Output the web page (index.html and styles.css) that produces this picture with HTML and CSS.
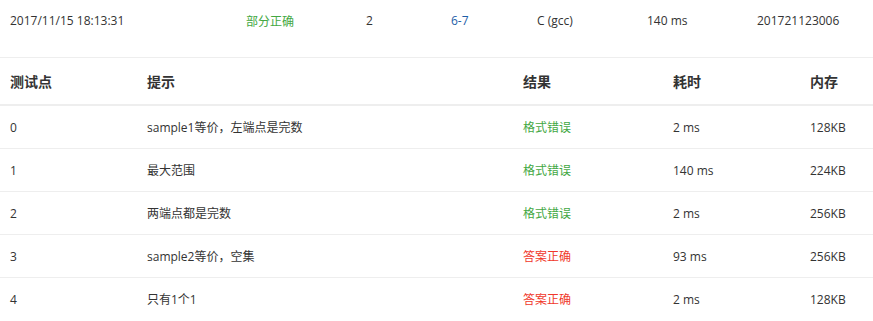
FILE: index.html
```html
<!DOCTYPE html>
<html lang="zh">
<head>
<meta charset="utf-8">
<link rel="stylesheet" href="styles.css">
</head>
<body>
<div class="summary">
  <span>2017/11/15 18:13:31</span>
  <span class="ok-part">部分正确</span>
  <span>2</span>
  <span class="link">6-7</span>
  <span>C (gcc)</span>
  <span>140 ms</span>
  <span>201721123006</span>
</div>
<div class="cases">
  <div class="row head">
    <span>测试点</span><span>提示</span><span>结果</span><span>耗时</span><span>内存</span>
  </div>
  <div class="row">
    <span>0</span><span>sample1等价，左端点是完数</span><span class="pe">格式错误</span><span>2 ms</span><span>128KB</span>
  </div>
  <div class="row">
    <span>1</span><span>最大范围</span><span class="pe">格式错误</span><span>140 ms</span><span>224KB</span>
  </div>
  <div class="row">
    <span>2</span><span>两端点都是完数</span><span class="pe">格式错误</span><span>2 ms</span><span>256KB</span>
  </div>
  <div class="row">
    <span>3</span><span>sample2等价，空集</span><span class="wa">答案正确</span><span>93 ms</span><span>256KB</span>
  </div>
  <div class="row last">
    <span>4</span><span>只有1个1</span><span class="wa">答案正确</span><span>2 ms</span><span>128KB</span>
  </div>
</div>
</body>
</html>
```

FILE: styles.css
```css
html, body {
  margin: 0;
  padding: 0;
  background: #fff;
}
body {
  font-family: "Open Sans", "Noto Sans CJK SC", sans-serif;
  font-size: 12px;
  color: #333;
}
.summary {
  display: grid;
  grid-template-columns: 236px 120px 85px 86px 110px 110px 1fr;
  padding-left: 10px;
  height: 41px;
  align-items: center;
  border-bottom: 1px solid #eeeeee;
  padding-bottom: 16px;
}
.ok-part { color: #43a843; }
.link { color: #1d5ea8; }
.cases { display: flex; flex-direction: column; }
.row {
  display: grid;
  grid-template-columns: 137px 376px 150px 137px 1fr;
  height: 42px;
  align-items: center;
  border-bottom: 1px solid #eeeeee;
}
.row > span { padding-left: 10px; }
.row.head {
  height: 46px;
  font-size: 14px;
  font-weight: bold;
  color: #333;
  border-bottom: 2px solid #eeeeee;
}
.row.last { border-bottom: none; }
.pe { color: #43a843; }
.wa { color: #f0382b; }
```
